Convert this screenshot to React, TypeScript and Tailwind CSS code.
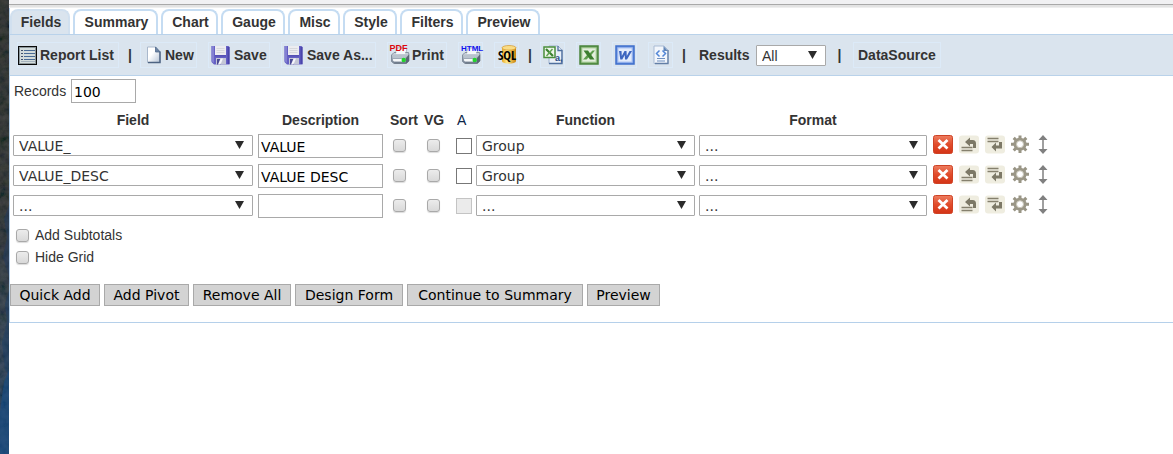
import type { ReactNode } from "react";

const tabs = ["Fields", "Summary", "Chart", "Gauge", "Misc", "Style", "Filters", "Preview"];
const tabWidths = ["w-[60px]", "w-[85px]", "w-[57px]", "w-[64px]", "w-[52px]", "w-[54px]", "w-[63px]", "w-[74px]"];

const field = "border border-[#a9a9a9] bg-white font-['DejaVu_Sans',Verdana,sans-serif] text-[14px]";

function Select({ label, value, className, font = "font-['DejaVu_Sans',Verdana,sans-serif]" }: { label: string; value: string; className: string; font?: string }) {
  return (
    <span className={`relative block h-[21px] ${className}`}>
      <select aria-label={label} defaultValue={value} className={`block h-full w-full appearance-none rounded-[1px] border border-[#a9a9a9] bg-white pt-[1px] pl-[5px] text-[14px] leading-[18px] font-normal text-[#333] outline-none ${font}`}>
        <option>{value}</option>
      </select>
      <svg className="pointer-events-none absolute top-[6px] right-[9px]" width="9" height="8" viewBox="0 0 9 8">
        <path d="M0 0h9L4.500 8z" fill="#2b2b2b" />
      </svg>
    </span>
  );
}

function Check({ label }: { label?: string }) {
  return (
    <input
      type="checkbox"
      aria-label={label}
      className="block h-[13px] w-[13px] shrink-0 appearance-none rounded-[3px] border border-[#a9a9a9] bg-linear-to-b from-[#ececec] to-[#d9d9d9] shadow-[0_1px_1px_#dcdcdc] checked:bg-[#777]"
    />
  );
}

function ListIcon() {
  return (
    <svg width="19" height="19" viewBox="0 0 19 19">
      <rect x=".5" y=".5" width="18" height="18" fill="#c3cdd0" stroke="#0a0a0a" />
      <rect x="1.500" y="1.500" width="16" height="16" fill="#d3dcdc" stroke="#8d979b" />
      <path d="M6 4.500h11M6 7.500h11M6 10.500h11M6 13.500h11" stroke="#4a6c96" />
      <path d="M3 4.500h2M3 7.500h2M3 10.500h2M3 13.500h2" stroke="#41516b" />
      <path d="M3 15.500h14" stroke="#a5b2bd" />
    </svg>
  );
}

function NewIcon() {
  return (
    <svg width="14" height="18" viewBox="0 0 14 18">
      <defs>
        <linearGradient id="page" x1="0" y1="0" x2="1" y2="1">
          <stop offset=".4" stopColor="#fff" />
          <stop offset="1" stopColor="#b5c3d5" />
        </linearGradient>
      </defs>
      <path d="M.5 1h8.500l4 4.500V16.500H.5z" fill="url(#page)" stroke="#a9b8cc" />
      <path d="M13 5.500v11H1" fill="none" stroke="#4d6382" strokeWidth="1.500" />
      <path d="M8.500 1v5H13z" fill="#6c84a4" stroke="#506a8c" strokeWidth=".8" />
    </svg>
  );
}

function SaveIcon() {
  return (
    <svg width="19" height="19" viewBox="0 0 19 19">
      <path d="M.5 0h17l1 1v17.500H3L.5 16z" fill="#6560c4" />
      <path d="M.5 0H3v17L.5 15z" fill="#8380d2" />
      <path d="M16.500 1v17h2V1z" fill="#4a45ab" />
      <path d="M4 0h11v9H4z" fill="#ececf0" />
      <path d="M5.500 2.500h8M5.500 4.500h8M5.500 6.500h8" stroke="#d6d8dc" />
      <path d="M4 9h11v1.500H4z" fill="#5550b4" />
      <path d="M5 12h10v6.500H5z" fill="#c4c7d6" />
      <path d="M6 13h4v5.500H6z" fill="#4a4a94" />
      <path d="M9.500 12.500H12l-2.500 6H7z" fill="#f5f6fb" />
    </svg>
  );
}

function PrinterIcon({ caption, html }: { caption: string; html?: boolean }) {
  return (
    <svg className="overflow-visible" width="20" height="20" viewBox="0 0 20 20">
      <defs>
        <linearGradient id="printer" x1="0" y1="0" x2="0" y2="1">
          <stop stopColor="#d3dae3" />
          <stop offset="1" stopColor="#738092" />
        </linearGradient>
      </defs>
      <path d="M5 10l2-7h10l-1.500 7z" fill="#f9fbfd" stroke="#98a3b1" strokeWidth=".7" />
      <path d="M1.500 10L4 7.500h14.500l.5 2.500v6l-2.500 2.500H4l-2.500-2z" fill="url(#printer)" stroke="#74808f" strokeWidth=".8" />
      <path d="M6 9l.5-3h9L15 9z" fill="#f6f8fb" />
      <path d="M2.500 10.500h14L15 13H3z" fill="#b9c3ce" />
      <path d="M3 14h9v2.500H4l-1-1z" fill="#f5f7f9" />
      <path d="M16 13l3-3.500V16l-3 2.500z" fill="#5b6674" />
      <circle cx="13.700" cy="15" r="2.200" fill="#22d52d" />
      <path d="M4.500 18h11.500" stroke="#667281" />
      <text x={html ? "0" : "-.5"} y="6" className={html ? "fill-[#1111f0] font-['Liberation_Sans',sans-serif] text-[8px] font-bold" : "fill-[#dd0710] font-['Liberation_Sans',sans-serif] text-[9px] font-bold"}>
        {caption}
      </text>
    </svg>
  );
}

function SqlIcon() {
  return (
    <svg className="overflow-visible" width="20" height="20" viewBox="0 0 20 20">
      <defs>
        <linearGradient id="gold">
          <stop stopColor="#e9a822" />
          <stop offset=".35" stopColor="#fde88c" />
          <stop offset="1" stopColor="#c98209" />
        </linearGradient>
      </defs>
      <path d="M5 2.500v13.500c0 3.500 14 3.500 14 0V2.500z" fill="url(#gold)" />
      <ellipse cx="12" cy="2.800" rx="7" ry="2.300" fill="#f9dc86" stroke="#d59a2c" strokeWidth=".7" />
      <text x="1" y="15" className="fill-black font-['Open_Sans_Condensed','Liberation_Sans_Narrow','Liberation_Sans',sans-serif] text-[13px] font-bold">SQL</text>
    </svg>
  );
}

function CsvIcon() {
  return (
    <svg width="20" height="20" viewBox="0 0 20 20">
      <path d="M6 1h9l4 4v13.500H6z" fill="#e9f0f9" stroke="#9fb3d0" />
      <path d="M15 1v4.500h4v13H6" fill="none" stroke="#4f6f9e" strokeWidth="1.300" />
      <rect x="1" y="2" width="11" height="10.500" fill="#f0f6ec" stroke="#4a8f3c" strokeWidth="1.500" />
      <path d="M3 4l7 7" stroke="#3c8230" strokeWidth="2.200" />
      <path d="M9.500 4L3.500 11" stroke="#62a553" strokeWidth="1.500" />
      <text x="12" y="16" className="fill-[#2b4d86] font-['Liberation_Sans',sans-serif] text-[9px] font-bold">a,</text>
    </svg>
  );
}

function ExcelIcon() {
  return (
    <svg width="20" height="20" viewBox="0 0 20 20">
      <rect x="1" y="1" width="18" height="18" fill="#6fa55e" stroke="#4a843d" strokeWidth="1.500" />
      <rect x="3" y="3" width="14" height="14" fill="#e4efdd" stroke="#b5d3a8" />
      <path d="M10 9l3.500-3.500H16L11.500 11z" fill="#5e9e4d" />
      <path d="M4 14.500L9 9l2 2-3.500 3.500z" fill="#5e9e4d" />
      <path d="M4.500 5.500h4.500l6.500 9H11z" fill="#3d7f30" />
    </svg>
  );
}

function WordIcon() {
  return (
    <svg width="20" height="20" viewBox="0 0 20 20">
      <rect x="1" y="1" width="18" height="18" fill="#7298e4" stroke="#3f6fcb" strokeWidth="1.500" />
      <rect x="3" y="3" width="14" height="14" fill="#e3ecfc" stroke="#b0c6f1" />
      <path d="M4 6h2.500l.3 5L9.500 6h2l.3 5L14.500 6H17l-5 8.500h-2L9.700 10 7.300 14.500h-2z" fill="#3d66c0" />
    </svg>
  );
}

function XmlIcon() {
  return (
    <svg width="20" height="20" viewBox="0 0 20 20">
      <path d="M3 1h10l4 4v13.500H3z" fill="#f2f6fc" stroke="#a9bbd4" />
      <path d="M12.500 1v5H17z" fill="#6286b7" />
      <path d="M17 5v13.500H4" fill="none" stroke="#637fa6" strokeWidth="1.300" />
      <path d="M8.500 5.500l-3 3 3 3M11.500 5.500l3 3-3 3" fill="none" stroke="#5387d7" strokeWidth="1.500" />
      <path d="M6 13.500h8M6 16h8" stroke="#6f90c0" />
    </svg>
  );
}

function Tool({ children, className, label }: { children: ReactNode; className: string; label?: string }) {
  return (
    <button type="button" aria-label={label} className={`flex h-[26px] items-center border border-[#dceaf8] font-bold whitespace-nowrap ${className}`}>
      {children}
    </button>
  );
}

function Separator() {
  return <span className="w-[21px] shrink-0 pl-[1px] text-center">|</span>;
}

function DeleteIcon() {
  return (
    <svg width="20" height="19" viewBox="0 0 20 19">
      <defs>
        <linearGradient id="red" x1="0" y1="0" x2="0" y2="1">
          <stop stopColor="#ed7d60" />
          <stop offset=".5" stopColor="#e14c2b" />
          <stop offset="1" stopColor="#d43416" />
        </linearGradient>
      </defs>
      <rect x=".5" y=".5" width="19" height="18" rx="2" fill="url(#red)" stroke="#cf4326" />
      <path d="M5.500 5l9 8.500M14.500 5l-9 8.500" stroke="#fff" strokeWidth="2.800" />
    </svg>
  );
}

function InsertIcon({ below }: { below?: boolean }) {
  return (
    <svg width="20" height="19" viewBox="0 0 20 19">
      <rect width="20" height="18" y=".5" rx="3" fill="#efede0" />
      {below ? (
        <>
          <path d="M2.500 3.500h11M2.500 6.500h11" stroke="#85806d" strokeWidth="1.400" />
          <path d="M6.500 12l4.500-4.500v3h3V7h3v6.500h-6v3z" fill="#7d7967" />
        </>
      ) : (
        <>
          <path d="M6 7l5-4.500V5h2.500C16 5 17 6.500 17 8.500V13h-3V9h-3v2.500z" fill="#7d7967" />
          <path d="M2.500 12.500h11M2.500 15.500h11" stroke="#85806d" strokeWidth="1.400" />
        </>
      )}
    </svg>
  );
}

function GearIcon() {
  return (
    <svg width="18" height="19" viewBox="0 0 18 19">
      <g stroke="#989484" strokeWidth="3">
        <path d="M9 .5v17.500M0 9.200h18M2.700 2.900l12.600 12.600M15.300 2.900L2.700 15.500" />
      </g>
      <circle cx="9" cy="9.200" r="6.500" fill="#9b9787" />
      <circle cx="9" cy="9.200" r="3.500" fill="#fff" stroke="#c9c6b9" />
    </svg>
  );
}

function MoveIcon() {
  return (
    <svg width="10" height="19" viewBox="0 0 10 19">
      <path d="M5 3v13" stroke="#808080" strokeWidth="1.500" />
      <path d="M5 0l4.500 5h-9zM5 19l4.500-5h-9z" fill="#808080" />
    </svg>
  );
}

const rows = [
  { name: "VALUE_", description: "VALUE", fn: "Group", enabled: true },
  { name: "VALUE_DESC", description: "VALUE DESC", fn: "Group", enabled: true },
  { name: "...", description: "", fn: "...", enabled: false },
];

const actions = ["Quick Add", "Add Pivot", "Remove All", "Design Form", "Continue to Summary", "Preview"];
const actionWidths = ["w-[90px]", "w-[85px]", "w-[98px]", "w-[108px]", "w-[176px]", "w-[73px]"];

export default function App() {
  return (
    <div className="flex min-h-screen bg-white font-['Liberation_Sans',Arial,sans-serif] text-[14px] text-[#333]">
      <div className="flex w-[9px] shrink-0 flex-col bg-linear-to-b from-[#20231e] via-[#262a24] via-45% to-[#1b4574]">
        <svg className="w-full flex-1" viewBox="0 0 9 454" preserveAspectRatio="none">
          <defs>
            <filter id="grain">
              <feTurbulence type="fractalNoise" baseFrequency=".14" numOctaves="4" seed="8" />
              <feColorMatrix values=".25 0 0 0 -.05  .2 .05 0 0 -.04  .2 0 .08 0 -.04  0 0 0 0 1" />
            </filter>
          </defs>
          <rect width="9" height="454" filter="url(#grain)" opacity=".4" />
          <path d="M9 205l-5 14 3 18-4 20 6 20z" fill="#223c62" opacity=".5" />
          <path d="M9 290l-4 14 2 18-5 20 3 28 4 5z" fill="#1d3f68" opacity=".5" />
          <path d="M9 370l-5 12-4 30v42h9z" fill="#164c86" opacity=".6" />
        </svg>
      </div>

      <main className="min-w-0 flex-1">
        <div className="h-[8px] border-b border-[#eee] bg-[#e3e3e3]">
          <div className="h-[5px] border-b border-[#a9a9a9] bg-[#f1f1f3]" />
        </div>
        <div className="border-b border-l border-[#b5d0ea]">
          <nav className="flex gap-[3px] bg-white pt-[1px]">
            {tabs.map((tab, i) => (
              <a
                key={tab}
                href="#"
                className={`flex h-[25px] shrink-0 items-center justify-center rounded-t-[8px] border-x-2 border-t-2 pl-[2px] font-bold ${tabWidths[i]} ${i === 0 ? "border-[#d1e0ef] bg-[#dae4ee]" : "border-[#c5dcf2] bg-white"}`}
              >
                {tab}
              </a>
            ))}
          </nav>

          <div className="flex h-[42px] items-center border-y border-[#b9d2ea] bg-[#dae4ee] pl-[7px] font-bold">
            <Tool className="w-[102px] gap-[3px]"><ListIcon />Report List</Tool>
            <Separator />
            <div className="flex gap-[11px]">
              <Tool className="w-[57px] gap-[4px] pl-[6px]"><NewIcon />New</Tool>
              <Tool className="w-[62px] gap-[4px] pl-[2px]"><SaveIcon />Save</Tool>
              <Tool className="w-[95px] gap-[4px] pl-[2px]"><SaveIcon />Save As...</Tool>
              <Tool className="w-[60px] gap-[2px] pl-[2px]"><PrinterIcon caption="PDF" />Print</Tool>
              <Tool className="w-[25px] justify-center" label="HTML print"><PrinterIcon caption="HTML" html /></Tool>
              <Tool className="w-[25px] justify-center" label="SQL"><SqlIcon /></Tool>
            </div>
            <Separator />
            <div className="flex gap-[11px]">
              <Tool className="w-[25px] justify-center" label="Export CSV"><CsvIcon /></Tool>
              <Tool className="w-[25px] justify-center" label="Export Excel"><ExcelIcon /></Tool>
              <Tool className="w-[25px] justify-center" label="Export Word"><WordIcon /></Tool>
              <Tool className="w-[25px] justify-center" label="Export XML"><XmlIcon /></Tool>
            </div>
            <Separator />
            <span className="w-[62px] shrink-0 pl-[5px]">Results</span>
            <Select label="Results" value="All" className="w-[70px] shrink-0" font="font-['Liberation_Sans',Arial,sans-serif]" />
            <span className="w-[27px] shrink-0 text-center">|</span>
            <Tool className="px-[4px]">DataSource</Tool>
          </div>

          <div className="flex h-[30px] items-center gap-[4px] pl-[4px]">
            <label htmlFor="records" className="w-[53px]">Records</label>
            <input id="records" defaultValue="100" className={`h-[24px] w-[65px] px-[2px] pt-[1px] text-black ${field}`} />
          </div>

          <table className="ml-[3px] w-[1040px] table-fixed border-collapse">
            <colgroup>
              <col className="w-[245px]" />
              <col className="w-[129px]" />
              <col className="w-[34px]" />
              <col className="w-[32px]" />
              <col className="w-[23px]" />
              <col className="w-[223px]" />
              <col className="w-[234px]" />
              <col />
            </colgroup>
            <thead>
              <tr className="h-[25px] *:p-0 *:pt-[4px] *:align-bottom">
                <th><span className="block w-[240px]">Field</span></th>
                <th><span className="block w-[125px]">Description</span></th>
                <th className="text-left"><span className="block pl-[3px]">Sort</span></th>
                <th className="text-left"><span className="block pl-[3px]">VG</span></th>
                <th className="text-left font-normal text-[#0b2447]"><span className="block pl-[4px]">A</span></th>
                <th><span className="block w-[219px]">Function</span></th>
                <th><span className="block w-[228px]">Format</span></th>
                <th />
              </tr>
            </thead>
            <tbody>
              {rows.map((row, i) => (
                <tr key={i} className="h-[30px] *:p-0 *:align-middle">
                  <td><div className="pb-[1px]"><Select label="Field" value={row.name} className="w-[240px]" /></div></td>
                  <td><input aria-label="Description" defaultValue={row.description} className={`block h-[24px] w-[125px] px-[2px] pt-[1px] text-black ${field}`} /></td>
                  <td><div className="pb-[1px] pl-[6px]"><Check label="Sort" /></div></td>
                  <td><div className="pb-[1px] pl-[6px]"><Check label="VG" /></div></td>
                  <td>
                    <div className="pl-[3px]">
                      <input type="checkbox" aria-label="A" disabled={!row.enabled} className="block h-[16px] w-[16px] appearance-none border border-[#777] bg-white disabled:border-[#c4c4c4] disabled:bg-[#ebebeb]" />
                    </div>
                  </td>
                  <td><div className="pb-[1px]"><Select label="Function" value={row.fn} className="w-[219px]" /></div></td>
                  <td><div className="pb-[1px]"><Select label="Format" value="..." className="w-[228px]" /></div></td>
                  <td>
                    <div className="flex items-center gap-[6px] pb-[4px]">
                      <button type="button" aria-label="Delete row"><DeleteIcon /></button>
                      <button type="button" aria-label="Insert above"><InsertIcon /></button>
                      <button type="button" aria-label="Insert below"><InsertIcon below /></button>
                      <button type="button" aria-label="Settings"><GearIcon /></button>
                      <button type="button" aria-label="Move row" className="pl-[3px]"><MoveIcon /></button>
                    </div>
                  </td>
                </tr>
              ))}
            </tbody>
          </table>

          <div className="flex flex-col pt-[3px] pl-[6px]">
            <label className="flex h-[22px] items-center gap-[6px]"><Check />Add Subtotals</label>
            <label className="flex h-[22px] items-center gap-[6px]"><Check />Hide Grid</label>
          </div>

          <div className="flex gap-[4px] pt-[16px] pb-[16px]">
            {actions.map((action, i) => (
              <button key={action} type="button" className={`h-[22px] border border-[#a9a9a9] bg-[#d3d3d3] font-['DejaVu_Sans',Verdana,sans-serif] text-[14px] leading-[20px] whitespace-nowrap text-black ${actionWidths[i]}`}>
                {action}
              </button>
            ))}
          </div>
        </div>
      </main>
    </div>
  );
}
